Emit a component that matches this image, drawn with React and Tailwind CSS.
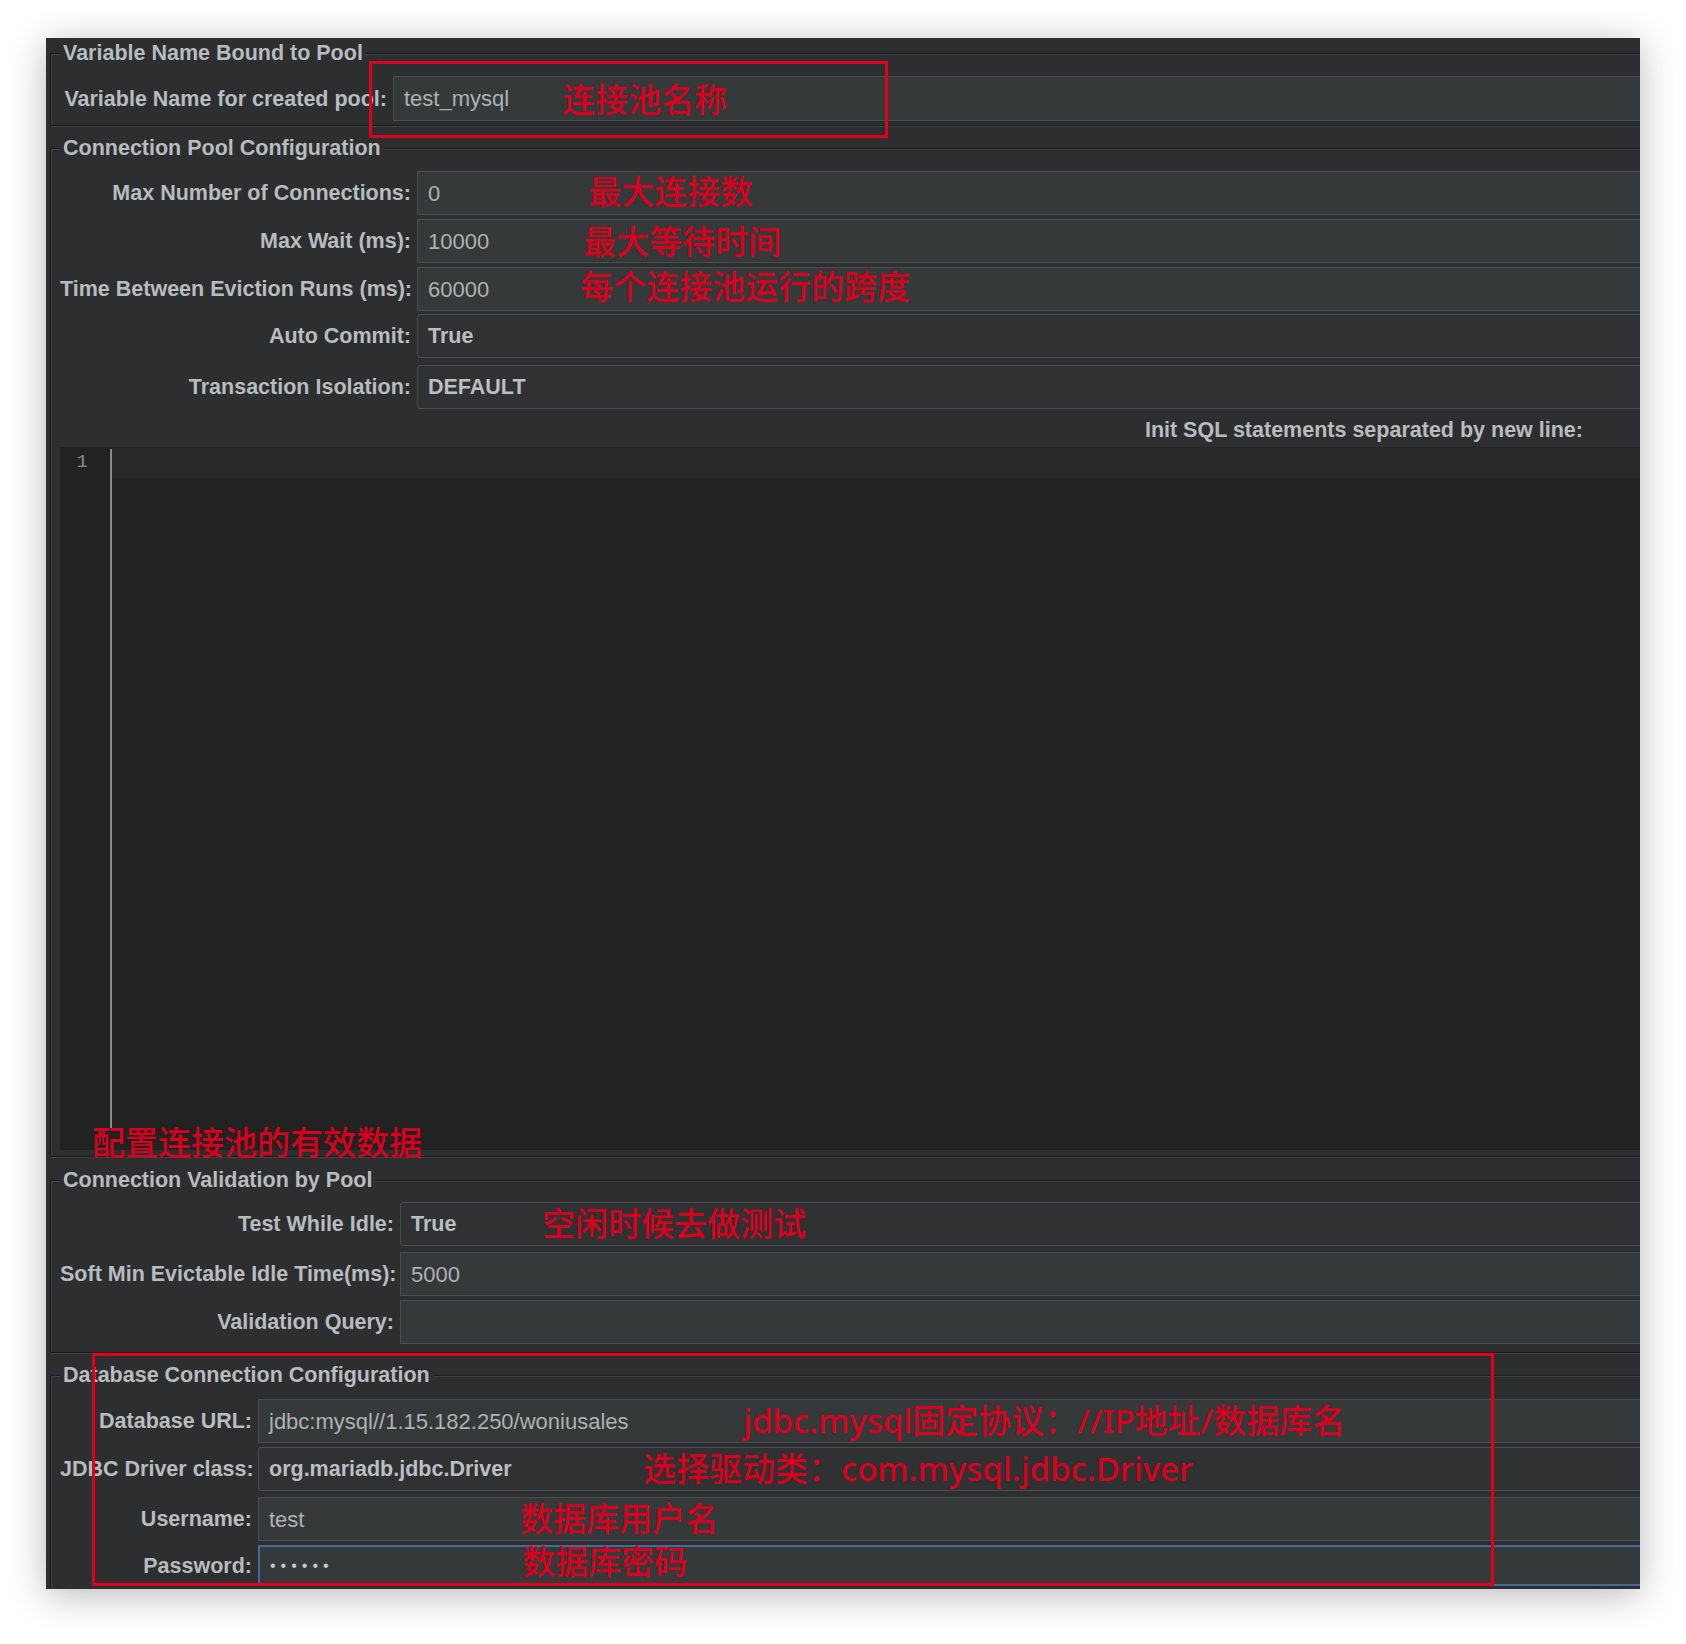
import React from 'react';

// JDBC Connection Configuration panel (dark theme) with red annotations on top

const labelCls = 'shrink-0 pr-[6px] text-right whitespace-nowrap font-bold text-[21.5px] leading-[24px] text-[#b9bcbf]';
const textFieldCls = 'flex-1 h-full flex items-center pl-[10px] bg-[#35393a] border border-[#4a4d50] text-[22px] text-[#aeb1b4] whitespace-nowrap';
const comboCls = 'flex-1 h-full flex items-center pl-[10px] bg-[#2f3133] border border-[#4a4d50] rounded-[3px] font-bold text-[21.5px] text-[#bcbfc2] whitespace-nowrap';

const Section = ({ title, className, children }) => (
  <div className={'relative w-[1630px] border border-[#1d1e1f] shadow-[inset_1px_1px_0_#3e4042,1px_1px_0_#3e4042] ' + className}>
    <span className="absolute -top-[13px] left-[9px] px-[3px] bg-[#2d2e30] font-bold text-[21.5px] leading-[24px] text-[#b9bcbf] whitespace-nowrap">
      {title}
    </span>
    {children}
  </div>
);

const Note = ({ className, children }) => (
  <div className={"absolute whitespace-nowrap text-[33px] leading-none font-medium text-[#d8001c] font-['Noto_Sans','Noto_Sans_CJK_SC',sans-serif] " + className}>
    {children}
  </div>
);

export default function App() {
  return (
    <div className="relative w-[1686px] h-[1644px] bg-white pt-[38px] pl-[46px] font-['Liberation_Sans',Arial,sans-serif]">
      <div className="w-[1594px] h-[1551px] overflow-hidden bg-[#2d2e30] shadow-[0_6px_36px_rgba(0,0,0,0.28)] pt-[15px] pl-[4px]">
        {/* Variable Name Bound to Pool */}
        <Section title="Variable Name Bound to Pool" className="h-[73px] pt-[22px] pb-[4px]">
          <div className="flex items-center h-[45px] pl-[9px]">
            <div className={labelCls + ' w-[333px]'}>Variable Name for created pool:</div>
            <div className={textFieldCls}>test_mysql</div>
          </div>
        </Section>

        {/* Connection Pool Configuration */}
        <Section title="Connection Pool Configuration" className="mt-[22px] pt-[22px] pb-[6px]">
          <div className="flex items-center h-[44px] pl-[9px]">
            <div className={labelCls + ' w-[357px]'}>Max Number of Connections:</div>
            <div className={textFieldCls}>0</div>
          </div>
          <div className="flex items-center h-[44px] mt-[4px] pl-[9px]">
            <div className={labelCls + ' w-[357px]'}>Max Wait (ms):</div>
            <div className={textFieldCls}>10000</div>
          </div>
          <div className="flex items-center h-[44px] mt-[4px] pl-[9px]">
            <div className={labelCls + ' w-[357px]'}>Time Between Eviction Runs (ms):</div>
            <div className={textFieldCls}>60000</div>
          </div>
          <div className="flex items-center h-[44px] mt-[3px] pl-[9px]">
            <div className={labelCls + ' w-[357px]'}>Auto Commit:</div>
            <div className={comboCls}>True</div>
          </div>
          <div className="flex items-center h-[44px] mt-[7px] pl-[9px]">
            <div className={labelCls + ' w-[357px]'}>Transaction Isolation:</div>
            <div className={comboCls}>DEFAULT</div>
          </div>
          <div className="h-[38px] pt-[9px] pr-[96px] text-right font-bold text-[21.5px] leading-[24px] text-[#b9bcbf]">
            Init SQL statements separated by new line:
          </div>
          {/* SQL editor */}
          <div className="ml-[9px] h-[703px] flex bg-[#222222]">
            <div className="w-[50px] pt-[3px] pr-[22px] text-right font-['Liberation_Mono',monospace] text-[19px] leading-[24px] text-[#8b8b8b]">
              1
            </div>
            <div className="w-[2px] mt-[2px] h-[679px] bg-[#8a8a8a]" />
            <div className="flex-1">
              <div className="h-[31px] bg-[#282828]" />
            </div>
          </div>
        </Section>

        {/* Connection Validation by Pool */}
        <Section title="Connection Validation by Pool" className="mt-[23px] pt-[21px] pb-[8px]">
          <div className="flex items-center h-[44px] pl-[9px]">
            <div className={labelCls + ' w-[340px]'}>Test While Idle:</div>
            <div className={comboCls}>True</div>
          </div>
          <div className="flex items-center h-[44px] mt-[6px] pl-[9px]">
            <div className={labelCls + ' w-[340px]'}>Soft Min Evictable Idle Time(ms):</div>
            <div className={textFieldCls}>5000</div>
          </div>
          <div className="flex items-center h-[44px] mt-[4px] pl-[9px]">
            <div className={labelCls + ' w-[340px]'}>Validation Query:</div>
            <div className={textFieldCls}></div>
          </div>
        </Section>

        {/* Database Connection Configuration */}
        <Section title="Database Connection Configuration" className="mt-[22px] pt-[23px] pb-[20px]">
          <div className="flex items-center h-[44px] pl-[9px]">
            <div className={labelCls + ' w-[198px]'}>Database URL:</div>
            <div className={textFieldCls}>jdbc:mysql//1.15.182.250/woniusales</div>
          </div>
          <div className="flex items-center h-[44px] mt-[4px] pl-[9px]">
            <div className={labelCls + ' w-[198px]'}>JDBC Driver class:</div>
            <div className={comboCls}>org.mariadb.jdbc.Driver</div>
          </div>
          <div className="flex items-center h-[44px] mt-[6px] pl-[9px]">
            <div className={labelCls + ' w-[198px]'}>Username:</div>
            <div className={textFieldCls}>test</div>
          </div>
          <div className="flex items-center h-[41px] mt-[4px] pl-[9px]">
            <div className={labelCls + ' w-[198px]'}>Password:</div>
            <div className="flex-1 h-full flex items-center pl-[10px] bg-[#35393a] border-2 border-[#46689a] text-[16px] tracking-[5px] text-[#c4c7ca]">
              ••••••
            </div>
          </div>
        </Section>
      </div>

      {/* red annotation boxes */}
      <div className="absolute left-[369px] top-[61px] w-[519px] h-[77px] border-[3px] border-[#e1001b]" />
      <div className="absolute left-[92px] top-[1353px] w-[1402px] h-[233px] border-[3px] border-[#e1001b]" />

      {/* red annotation texts */}
      <Note className="left-[562px] top-[83px]">连接池名称</Note>
      <Note className="left-[588px] top-[175px]">最大连接数</Note>
      <Note className="left-[583px] top-[225px]">最大等待时间</Note>
      <Note className="left-[580px] top-[270px]">每个连接池运行的跨度</Note>
      <Note className="left-[92px] top-[1126px]">配置连接池的有效数据</Note>
      <Note className="left-[542px] top-[1207px]">空闲时候去做测试</Note>
      <Note className="left-[743px] top-[1404px]">jdbc.mysql固定协议：//IP地址/数据库名</Note>
      <Note className="left-[643px] top-[1452px]">选择驱动类：com.mysql.jdbc.Driver</Note>
      <Note className="left-[520px] top-[1502px]">数据库用户名</Note>
      <Note className="left-[522px] top-[1545px]">数据库密码</Note>
    </div>
  );
}
